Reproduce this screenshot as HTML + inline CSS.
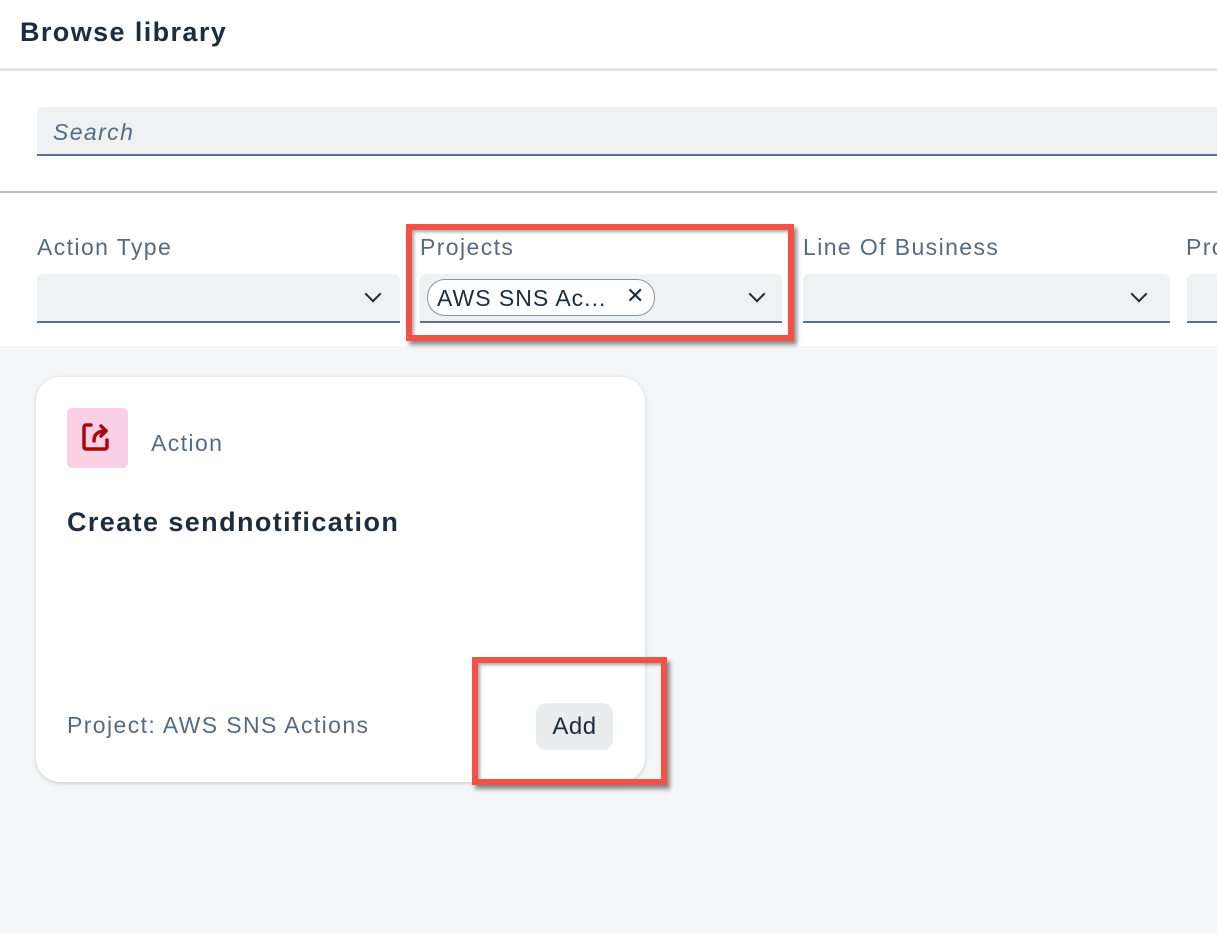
<!DOCTYPE html>
<html><head><style>
*{margin:0;padding:0;box-sizing:border-box}
body{width:1217px;height:934px;overflow:hidden;background:#f5f6f7;font-family:"Liberation Sans",sans-serif;position:relative;letter-spacing:1.4px}
.a{position:absolute}
.lbl{font-size:23px;color:#556b82}
.dd{background:#eff1f2;border-bottom:2px solid #5b738b;border-radius:6px 6px 0 0;height:49px}
.chev{position:absolute;width:12px;height:12px;border-right:2.5px solid #1d2d3e;border-bottom:2.5px solid #1d2d3e;transform:rotate(45deg)}
.red{border:6px solid #f25245;box-shadow:3px 4px 4px rgba(0,0,0,.45), inset 2px 2px 3px rgba(0,0,0,.35)}
</style></head><body>
<div class="a" style="left:0;top:0;width:1217px;height:346px;background:#fff"></div>
<div class="a" style="left:20px;top:17px;font-size:27px;font-weight:bold;color:#1d2d3e">Browse library</div>
<div class="a" style="left:0;top:68px;width:1217px;height:3px;background:#e2e5e8"></div>
<div class="a" style="left:37px;top:107px;width:1180px;height:49px;background:#eff1f2;border-bottom:2px solid #5b738b;border-radius:6px 0 0 0"></div>
<div class="a" style="left:53px;top:119px;font-size:23px;font-style:italic;color:#556b82">Search</div>
<div class="a" style="left:0;top:191px;width:1217px;height:2px;background:#b5bfc9"></div>
<div class="a lbl" style="left:37px;top:234px">Action Type</div>
<div class="a lbl" style="left:420px;top:234px">Projects</div>
<div class="a lbl" style="left:803px;top:234px">Line Of Business</div>
<div class="a lbl" style="left:1186px;top:234px">Pro</div>
<div class="a dd" style="left:37px;top:274px;width:363px"></div>
<div class="a dd" style="left:420px;top:274px;width:362px"></div>
<div class="a dd" style="left:803px;top:274px;width:367px"></div>
<div class="a dd" style="left:1187px;top:274px;width:40px"></div>
<div class="chev" style="left:367px;top:288px"></div>
<div class="chev" style="left:751px;top:288px"></div>
<div class="chev" style="left:1133px;top:288px"></div>
<div class="a" style="left:427px;top:279px;width:228px;height:37px;border:1.5px solid #8396a8;border-radius:18px;background:#fff"></div>
<div class="a" style="left:437px;top:285px;font-size:23px;color:#1d2d3e;letter-spacing:1px">AWS SNS Ac...</div>
<div class="a" style="left:626px;top:283px;font-size:22px;color:#1d2d3e">✕</div>
<div class="a red" style="left:406px;top:224px;width:388px;height:117px"></div>
<div class="a" style="left:36px;top:377px;width:609px;height:405px;background:#fff;border-radius:24px;box-shadow:0 1px 4px rgba(0,0,0,.18)"></div>
<div class="a" style="left:67px;top:408px;width:61px;height:60px;background:#fbd0e4;border-radius:5px"></div>
<svg class="a" style="left:80px;top:421px" width="34" height="34" viewBox="0 0 34 34" fill="none" stroke="#aa0808" stroke-width="3.5" stroke-linecap="round" stroke-linejoin="round">
<path d="M11 4H6a2 2 0 0 0-2 2v20a2 2 0 0 0 2 2h19a2 2 0 0 0 2-2v-7"/><path d="M14 20c0-7 4-10 12-10"/><path d="M21 5l5 5-5 5"/></svg>
<div class="a lbl" style="left:151px;top:430px">Action</div>
<div class="a" style="left:67px;top:507px;font-size:27px;font-weight:bold;color:#1d2d3e">Create sendnotification</div>
<div class="a lbl" style="left:67px;top:712px">Project: AWS SNS Actions</div>
<div class="a" style="left:536px;top:703px;width:77px;height:47px;background:#eaecee;border-radius:10px;font-size:24px;color:#1d2d3e;text-align:center;line-height:48px;letter-spacing:0.5px">Add</div>
<div class="a red" style="left:472px;top:657px;width:195px;height:128px"></div>
</body></html>
